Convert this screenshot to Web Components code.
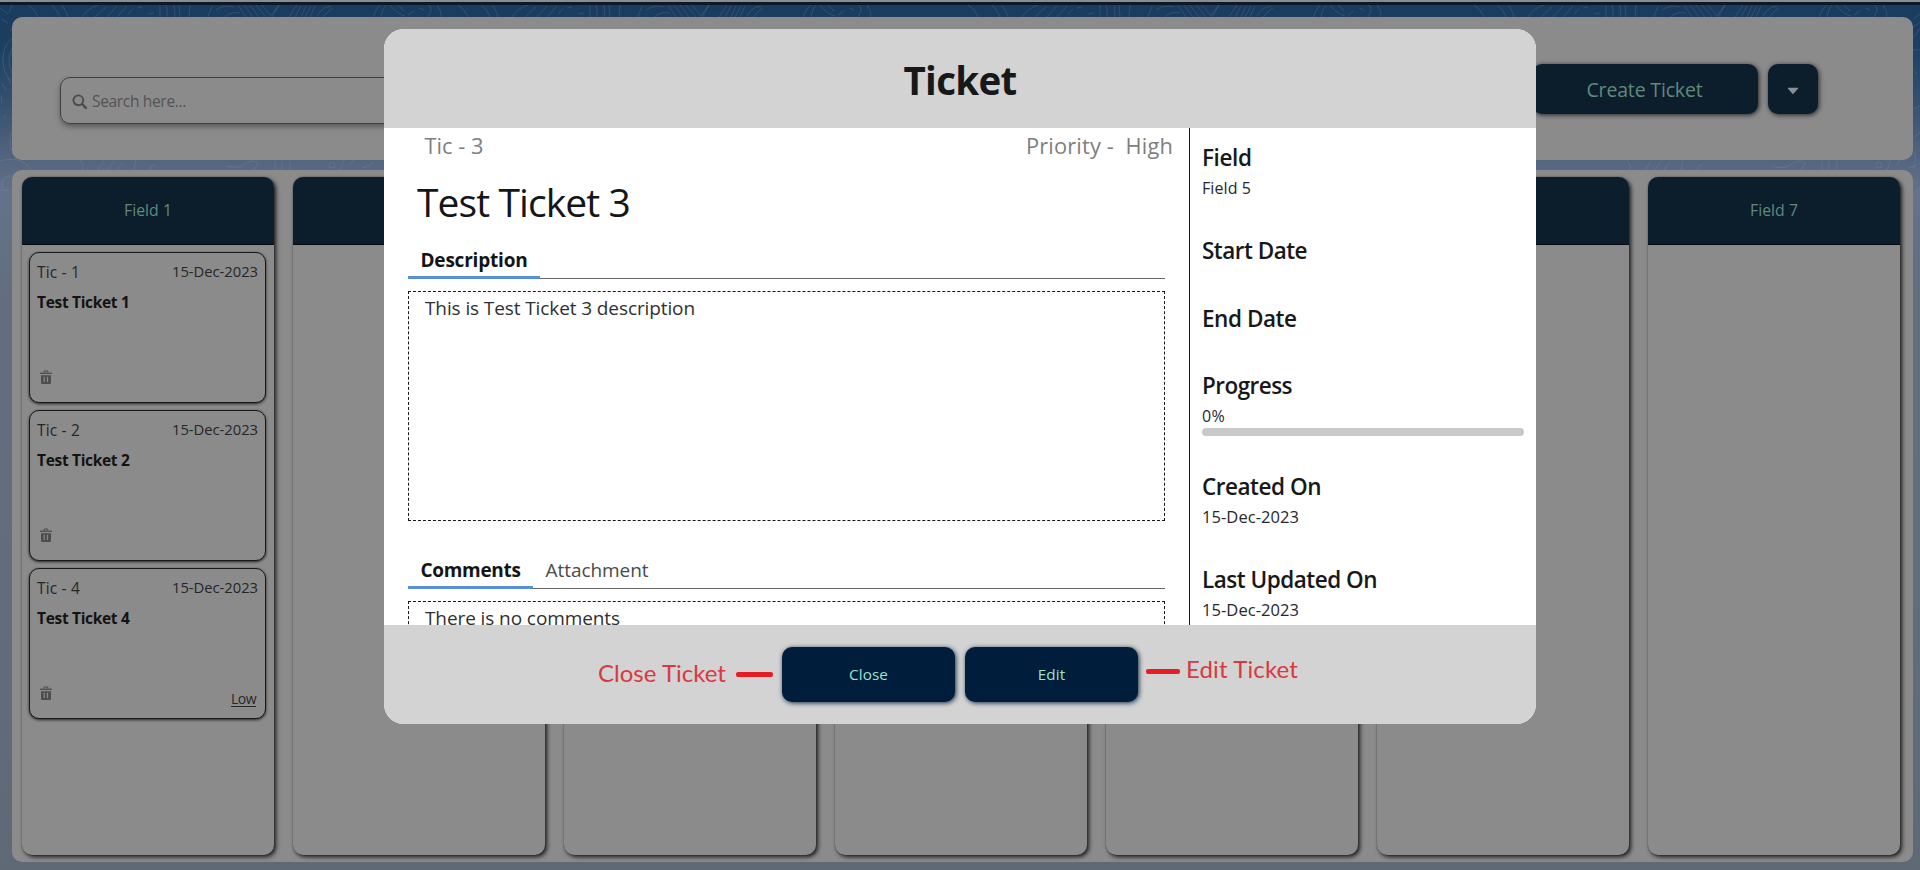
<!DOCTYPE html>
<html lang="en">
<head>
<meta charset="utf-8">
<title>Ticket</title>
<style>
html,body{margin:0;height:100%;overflow:hidden}
body{font-family:"Open Sans","Noto Sans",sans-serif;color:#17181a}
</style>
</head>
<body>
<ticket-app></ticket-app>
<script>
const make = (tag, html, setup) => {
  const template = document.createElement('template');
  template.innerHTML = html;
  customElements.define(tag, class extends HTMLElement {
    connectedCallback() {
      if (this.shadowRoot) return;
      this.attachShadow({ mode: 'open' }).append(template.content.cloneNode(true));
      if (setup) setup(this, this.shadowRoot);
    }
  });
};

/* A single line of text, tracked so that it fills the width in "w". */
make('text-line', `<style>
:host{display:inline-block;width:max-content;white-space:pre;flex:none}
</style><slot></slot>`, host => {
  host.style.fontSize = host.getAttribute('size') + 'px';
  const w = +host.getAttribute('w');
  const natural = host.getBoundingClientRect().width;
  if (w && natural) host.style.letterSpacing = ((w - natural) / host.textContent.length).toFixed(3) + 'px';
});

make('backdrop-lines', `<style>
:host{display:block;position:absolute;inset:0;background:linear-gradient(#1a3b5c 0,#1c3f62 45px,#34506f 100px,#52637e 155px,#64738a 195px,#626e7e 300px,#626d7c 600px,#5f6976 870px)}
svg{display:block;width:100%;height:100%}
</style>
<svg viewBox="0 0 1920 870" fill="none" stroke="#8fa6bd" stroke-opacity=".2" stroke-width="1">
<defs><g id="top">
<path d="M28 5q8 5 10 12M52 5q6 6 8 12M62 5q5 7 6 12M82 17q6-9 16-12M95 17l11-10M107 17l10-11M117 17l10-11M128 14l5-5M137 8l5-1M148 14l6-1M160 5v12M166 5q2 6 1 12M174 5l1 12M179 5l1 12M190 5l-1 12M208 17l4-11M216 10q8-6 18-3M225 17q5-6 15-4M238 5l8 12M244 5l9 12M250 5l9 12M256 5l10 12M262 5l9 11M272 17l7-12M279 5q-4 6-8 10M289 17l8-12M295 17l6-11M301 17l5-11M305 17l6-11M310 17l5-11M317 16q5-9 14-10M323 17q6-7 10-9"/>
<path d="M373 17q3-8 7-12M381 17q1-8 5-12M390 5q7 9 15 11M398 5l6 6M408 15l6-4M419 8l5 2M428 17q6-10 0-12M437 5q5 6 4 12"/>
</g><g id="mid">
<path d="M80 160q5 5 2 10M98 170l6-9M108 170l6-9M117 170l6-8M136 160l-2 10M155 165q-4 0-5 5M226 166q13 4 20-3q8-4 12 0l-4 7M275 160v10M282 160v10M290 160v10M329 165a3 3 0 1 0 6 0a3 3 0 1 0-6 0M340 170l4-10M350 165l3-5M362 168q7-1 12-6"/>
</g></defs>
<use href="#top"/><use href="#top" x="430"/><use href="#top" x="940"/><use href="#top" x="1446"/>
<use href="#mid"/><use href="#mid" x="1120"/><use href="#mid" x="1547"/>
<path d="M0 8l8 6M1 19l7 4M12 5l-3 8M10 30h3M12 39q-8 4-9 18q-1 14 7 23M12 48q-6 15 0 25M8 78q2 2 2 5M2 84l4 6M1 96l1 7M5 115v4M12 131q-4 13 0 20M0 161q16-5 26 3q5 4 5 8M12 176q-11-1-10 12M0 190h9M1460 163q18-5 28 5"/>
<path d="M1920 14l-7 5M1920 22l-7 5M1920 29l-7 9M1913 50h7M1914 71l3 4M1920 106l-7 3M1920 132l-6 6M1913 151q5 6 0 18M1920 187l-4 5"/>
</svg>`);

make('nav-button', `<style>
:host{display:flex;align-items:center;justify-content:center;box-sizing:border-box;border-radius:10px;background:#0c1d2c;color:#5f8a7c;box-shadow:1px 1px 5px rgba(0,0,0,.75);line-height:50px}
:host([bright]){background:#001e3c;color:#9be3cb;width:173px;height:55px;line-height:55px;box-shadow:1px 1px 5px #142b45}
</style><slot></slot>`);

make('search-box', `<style>
:host{display:flex;align-items:center;box-sizing:border-box;border:1px solid #3f3f3f;border-radius:10px;height:47px;width:430px;padding-left:11px;color:#535353;box-shadow:0 3px 5px rgba(40,40,40,.45)}
svg{display:block;margin:2px 4px 0 0}
text-line{line-height:47px;margin-top:2px}
</style>
<svg width="16" height="16" viewBox="0 0 16 16" fill="none" stroke="#4a4a4a"><circle cx="6.3" cy="6.3" r="4.9" stroke-width="1.9"/><path d="M9.9 9.9l4.7 4.7" stroke-width="2.2"/></svg>
<text-line size="15.5" w="94">Search here...</text-line>`);

make('top-panel', `<style>
:host{display:flex;box-sizing:border-box;height:143px;background:#8b8b8b;border-radius:10px;padding:0 95px 0 48px;justify-content:space-between;align-items:flex-start}
search-box{margin-top:60px}
.actions{display:flex;gap:10px;margin-top:47px}
.create{width:226px;height:50px}.more{width:50px;height:50px}
.create text-line{margin:2px 1px 0 0}
.more svg{margin-top:3px}
</style>
<search-box></search-box>
<div class="actions">
<nav-button class="create"><text-line size="19.5" w="116">Create Ticket</text-line></nav-button>
<nav-button class="more"><svg width="12" height="8" viewBox="0 0 12 8"><path d="M1.2.8h9.6q.7 0 .3.6L6.5 6.8q-.5.5-1 0L.9 1.400q-.4-.6.3-.6z" fill="#8b8f93"/></svg></nav-button>
</div>`);

make('ticket-card', `<style>
:host{display:flex;flex-direction:column;box-sizing:border-box;height:150.5px;border:1px solid #191919;border-radius:10px;padding:6px 7px 0 7px;color:#262626;background:#8b8b8b;box-shadow:0 1px 3px rgba(0,0,0,.75)}
div{display:flex;justify-content:space-between}
.meta{line-height:24px}.meta text-line:first-child{margin-top:1px}
.name{font-weight:700;line-height:24px;color:#131313;margin-top:6px}
.foot{margin-top:56px;padding:0 2px 0 2px;line-height:24px;align-items:flex-start}
svg{display:block}.pri{text-decoration:underline;text-underline-offset:2px;margin-top:1px}
</style>
<div class="meta"><text-line size="15.500" w="43" class="id"></text-line><text-line size="14.800" w="86">15-Dec-2023</text-line></div>
<div class="name"><text-line size="15.500" w="92.500" class="title"></text-line></div>
<div class="foot"><svg width="14" height="15" viewBox="0 0 14 15"><path d="M5.200 2.500V1.600q0-.6.600-.6h2.400q.6 0 .6.600v.9" fill="none" stroke="#4d4d4d" stroke-width="1.100"/><path d="M1 2.600h12v1.300H1z" fill="#4d4d4d"/><path fill-rule="evenodd" d="M2 5.200h10v7.600q0 1.200-1.200 1.200H3.200Q2 14 2 12.800zM4.600 6.800v5.100h1.200V6.800zM7.900 6.800v5.100h1.200V6.800z" fill="#4d4d4d"/></svg></div>`,
(host, root) => {
  const n = host.getAttribute('number');
  root.querySelector('.id').textContent = 'Tic - ' + n;
  root.querySelector('.title').textContent = 'Test Ticket ' + n;
  for (const line of root.querySelectorAll('.id,.title')) line.replaceWith(line.cloneNode(true));
  if (host.hasAttribute('priority')) {
    const p = document.createElement('text-line');
    p.className = 'pri'; p.setAttribute('size', '14'); p.setAttribute('w', '25');
    p.textContent = host.getAttribute('priority');
    root.querySelector('.foot').append(p);
  }
});

make('board-column', `<style>
:host{display:flex;flex-direction:column;flex:none;width:252px;height:678px;border-radius:10px;background:#8b8b8b;box-shadow:2px 2px 4px rgba(0,0,0,.8),0 0 1px rgba(0,0,0,.6)}
header{box-sizing:border-box;height:68px;line-height:67px;text-align:center;background:#0c1d2c;color:#5f8a7c;border-bottom:1px solid #05090e;border-radius:10px 10px 0 0}
div{display:flex;flex-direction:column;gap:7.500px;padding:7px 8px 0 7px}
</style><header></header><div><slot></slot></div>`,
(host, root) => {
  if (!host.hasAttribute('label')) return;
  const t = document.createElement('text-line');
  t.setAttribute('size', '15.8'); t.setAttribute('w', '48');
  t.textContent = host.getAttribute('label');
  root.querySelector('header').append(t);
});

make('board-panel', `<style>
:host{display:flex;gap:19px;box-sizing:border-box;height:692px;background:#8b8b8b;border-radius:10px;padding:7px 13px 0 10px;margin-top:10px}
</style>
<board-column label="Field 1"><ticket-card number="1"></ticket-card><ticket-card number="2"></ticket-card><ticket-card number="4" priority="Low"></ticket-card></board-column>
<board-column></board-column><board-column></board-column><board-column></board-column><board-column></board-column><board-column></board-column><board-column label="Field 7"></board-column>`);

make('tab-bar', `<style>
:host{display:flex;height:34px;line-height:30px;color:#4a4a4a;background:linear-gradient(#666,#666) 0 33px/100% 1px no-repeat}
::slotted(*){box-sizing:border-box;height:34px;padding:0 12.500px}
::slotted([active]){font-weight:700;color:#131416;border-bottom:3px solid #5790d4}
</style><slot></slot>`);

make('dashed-box', `<style>
:host{display:block;box-sizing:border-box;border:1px dashed #16181a;margin-top:12px;padding:1px 16px;height:230px;line-height:30px;color:#2e3032}
</style><slot></slot>`);

make('detail-item', `<style>
:host{display:block}
.name{display:block;line-height:30px;font-weight:600;color:#17181a}
.value{display:block;line-height:24px;margin-top:2.500px;color:#26282c}
::slotted([slot=name]){display:block}
</style><div class="name"><slot name="name"></slot></div><div class="value"><slot></slot></div>`);

make('red-note', `<style>
:host{display:flex;align-items:center;gap:10px;position:absolute;font-family:Lato,"Open Sans",sans-serif;line-height:30px;color:#d9393f}
i{display:block;width:37px;height:5px;border-radius:2px;background:#e71d25;margin-top:2px}
:host([before]) {flex-direction:row-reverse;gap:6px}
:host([before]) i{width:34px;margin-top:4px}
</style><slot></slot><i></i>`);

make('ticket-dialog', `<style>
:host{display:flex;flex-direction:column;position:absolute;left:384px;top:29px;width:1152px;height:695px;border-radius:20px;overflow:hidden;background:#fff}
header,footer{flex:none;height:99px;background:#d3d3d3}
header{box-sizing:border-box;padding-top:2px;text-align:center;line-height:99px;font-weight:700}
main{display:flex;flex:1;min-height:0;overflow:hidden}
.left{display:flex;flex-direction:column;width:805px;box-sizing:border-box;padding:3px 0 0 24px}
.meta{display:flex;justify-content:space-between;line-height:30px;height:30px;color:#7e7e7e;padding:0 16px 0 16.500px}
.title{line-height:50px;height:50px;margin-top:16px;padding-left:9px;color:#141618}
.main{margin:18px 24px 0 0;flex:none}
tab-bar.second{margin-top:34px}
aside{box-sizing:border-box;width:347px;border-left:1px solid #17191b;padding:15px 12px 0 12px}
detail-item{height:93px}
.start{height:68px}.end{height:67px}.progress{height:101px}
.bar{height:8px;border-radius:4px;background:#c8c8c8}
footer{position:relative;display:flex;align-items:center;justify-content:center;gap:10px}
.n1{left:214px;top:33px}.n2{left:762px;top:29px}
</style>
<header><text-line size="38.500" w="113">Ticket</text-line></header>
<main>
<div class="left">
<div class="meta"><text-line size="21.800" w="59">Tic - 3</text-line><text-line size="21.800" w="147">Priority -&nbsp; High</text-line></div>
<div class="title"><text-line size="39" w="213">Test Ticket 3</text-line></div>
<div class="main">
<tab-bar><text-line active size="19" w="132">Description</text-line></tab-bar>
<dashed-box><text-line size="19" w="270">This is Test Ticket 3 description</text-line></dashed-box>
<tab-bar class="second"><text-line active size="19" w="125">Comments</text-line><text-line size="19" w="128">Attachment</text-line></tab-bar>
<dashed-box><text-line size="19" w="195">There is no comments</text-line></dashed-box>
</div>
</div>
<aside>
<detail-item><text-line slot="name" size="22.500" w="49.500">Field</text-line><text-line size="16" w="49">Field 5</text-line></detail-item>
<detail-item class="start"><text-line slot="name" size="22.500" w="105">Start Date</text-line></detail-item>
<detail-item class="end"><text-line slot="name" size="22.500" w="94.500">End Date</text-line></detail-item>
<detail-item class="progress"><text-line slot="name" size="22.500" w="90">Progress</text-line><text-line size="16" w="23">0%</text-line><div class="bar"></div></detail-item>
<detail-item><text-line slot="name" size="22.500" w="119">Created On</text-line><text-line size="16.500" w="97">15-Dec-2023</text-line></detail-item>
<detail-item><text-line slot="name" size="22.500" w="175">Last Updated On</text-line><text-line size="16.500" w="97">15-Dec-2023</text-line></detail-item>
</aside>
</main>
<footer>
<nav-button bright><text-line size="15.300" w="39">Close</text-line></nav-button>
<nav-button bright><text-line size="15.300" w="27.500">Edit</text-line></nav-button>
<red-note class="n1"><text-line size="24" w="128">Close Ticket</text-line></red-note>
<red-note before class="n2"><text-line size="24" w="112">Edit Ticket</text-line></red-note>
</footer>`);

make('ticket-app', `<style>
:host{display:block;position:relative;width:1920px;height:870px;overflow:hidden}
.strip{position:relative;height:3px;border-top:2px solid #8a8c8e;background:#0b1a29}
.page{position:relative;padding:12px 7px 0 12px}
</style>
<backdrop-lines></backdrop-lines>
<div class="strip"></div>
<div class="page"><top-panel></top-panel><board-panel></board-panel></div>
<ticket-dialog></ticket-dialog>`);
</script>
</body>
</html>
